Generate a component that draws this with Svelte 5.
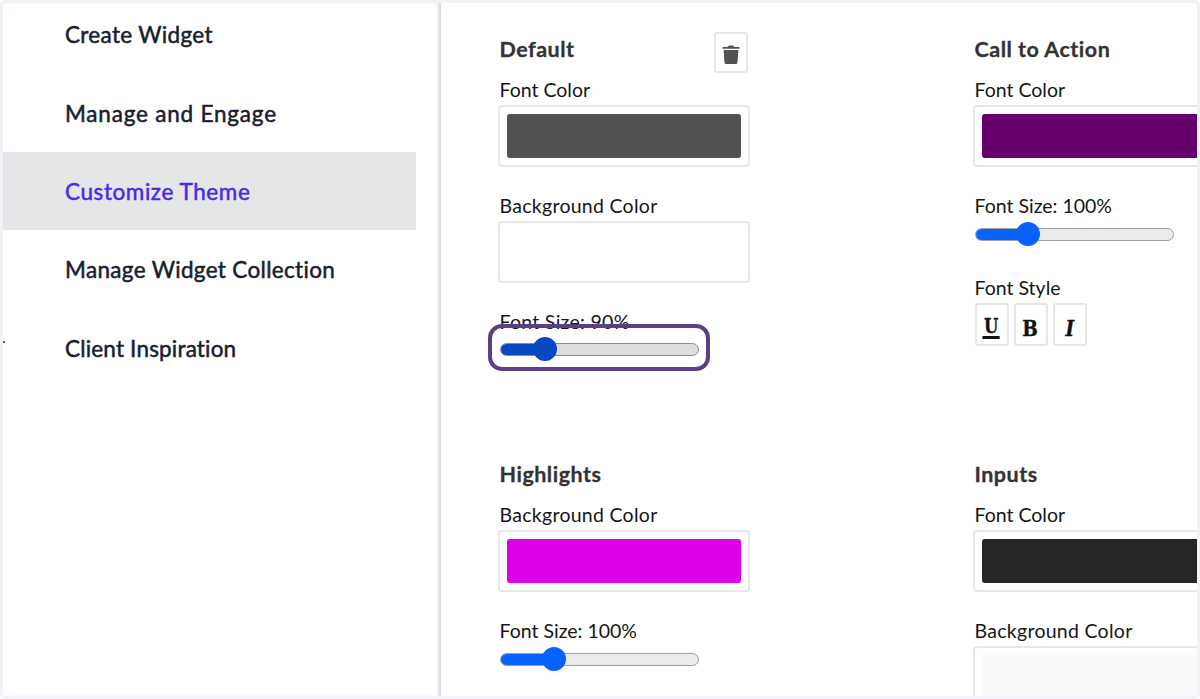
<script>
  const links = [
    { title: 'Create Widget', fit: 'create' },
    { title: 'Manage and Engage', fit: 'engage' },
    { title: 'Customize Theme', fit: 'theme', active: true },
    { title: 'Manage Widget Collection', fit: 'collection' },
    { title: 'Client Inspiration', fit: 'client' }
  ];

  const sections = [
    {
      title: 'Default',
      removable: true,
      fields: [
        { label: 'Font Color', color: '#525252' },
        { label: 'Background Color', color: '#ffffff', wide: true },
        { label: 'Font Size', size: 90, position: 22.6, focused: true, wide: true }
      ]
    },
    {
      title: 'Call to Action',
      fields: [
        { label: 'Font Color', color: '#68006c' },
        { label: 'Font Size', size: 100, position: 26.7 },
        { label: 'Font Style', styles: true }
      ]
    },
    {
      title: 'Highlights',
      fields: [
        { label: 'Background Color', color: '#dc00e8', wide: true },
        { label: 'Font Size', size: 100, position: 26.9 }
      ]
    },
    {
      title: 'Inputs',
      fields: [
        { label: 'Font Color', color: '#262626' },
        { label: 'Background Color', color: '#fafafa', wide: true }
      ]
    }
  ];
</script>

<div class="frame">
  <aside>
    <nav>
      {#each links as link}
        <a href="#top" class:active={link.active}><span class={link.fit}>{link.title}</span></a>
      {/each}
    </nav>
    <i class="tick"></i>
  </aside>

  <main>
    {#each sections as section}
      <section>
        <header>
          <h2>{section.title}</h2>
          {#if section.removable}
            <button class="trash" aria-label="Delete">
              <svg width="18" height="20" viewBox="0 0 18 20">
                <path d="M1 2h4.2q.5 0 .8-.5l.3-.5q.3-.5.9-.5h3.6q.6 0 .9.5l.3.5q.3.5.8.5H17q.5 0 .5.5v.7q0 .5-.5.5H1q-.5 0-.5-.5v-.7Q.5 2 1 2zM1.6 5h14.8l-.9 12.4q-.1 1.6-1.7 1.6H4.2q-1.6 0-1.7-1.6z" />
              </svg>
            </button>
          {/if}
        </header>
        {#each section.fields as field}
          <div class="field">
            <div class="label" class:wide={field.wide}>
              {field.label}{field.size ? `: ${field.size}%` : ''}
            </div>
            {#if field.color}
              <div class="picker">
                <div class="swatch" style="background: {field.color}"></div>
              </div>
            {:else if field.size}
              <div class="slider" class:focused={field.focused}>
                <div class="track">
                  <div class="fill" style="width: {field.position}%"></div>
                </div>
                <div class="thumb" style="left: {field.position}%"></div>
              </div>
            {:else if field.styles}
              <div class="styles">
                <button class="underline"><b>U</b></button>
                <button><b>B</b></button>
                <button class="italic"><b>I</b></button>
              </div>
            {/if}
          </div>
        {/each}
      </section>
    {/each}
  </main>
</div>

<style>
  :global(body) {
    background: #fff;
    overflow: hidden;
  }

  .frame {
    box-sizing: border-box;
    width: 1200px;
    height: 699px;
    border: 3px solid #f3f2f8;
    border-radius: 6px;
    overflow: hidden;
    display: flex;
    font-family: Lato, "Open Sans", sans-serif;
    font-variant-ligatures: none;
    color: #161616;
  }

  aside {
    position: relative;
    flex: none;
    box-sizing: border-box;
    width: 438px;
    border-right: 2px solid #dcdce0;
    box-shadow: inset -2px 0 2px #ececf2;
  }

  nav {
    margin-top: -8px;
    width: 413px;
  }

  nav a {
    box-sizing: border-box;
    display: flex;
    align-items: center;
    height: 78.4px;
    padding: 1px 0 0 62px;
    font-size: 22.5px;
    color: #172030;
    text-decoration: none;
    white-space: nowrap;
    -webkit-text-stroke: 0.5px currentColor;
  }

  nav a.active {
    background: #e5e6e8;
    color: #4c28e6;
  }

  .create,
  .collection {
    letter-spacing: 0.33px;
  }

  .engage {
    letter-spacing: 0.8px;
  }

  .theme {
    letter-spacing: 0.58px;
  }

  .client {
    letter-spacing: 0.18px;
  }

  .tick {
    position: absolute;
    left: 0;
    top: 338px;
    width: 2px;
    height: 2px;
    background: #555a66;
  }

  main {
    flex: none;
    display: grid;
    grid-template-columns: 475px 475px;
    grid-template-rows: 425px 425px;
    padding: 28px 0 0 59px;
  }

  header {
    display: flex;
    justify-content: space-between;
    width: 248px;
    height: 44px;
  }

  h2 {
    margin: 0 0 0 -0.5px;
    font-size: 21.5px;
    line-height: 36px;
    letter-spacing: 0.5px;
    color: #333;
    white-space: nowrap;
    -webkit-text-stroke: 0.3px currentColor;
  }

  button {
    box-sizing: border-box;
    width: 34px;
    height: 43.5px;
    padding: 0;
    border: 2px solid #e7e7e7;
    border-radius: 3px;
    background: #fff;
    color: #111;
  }

  .trash {
    height: 41px;
    margin-top: 1px;
    padding: 4px 0 0;
  }

  .trash svg {
    display: block;
    margin: 0 auto;
    fill: #525252;
  }

  .field {
    margin-bottom: 24.5px;
  }

  .label {
    height: 30px;
    line-height: 30px;
    margin-left: -0.5px;
    font-size: 19.5px;
    white-space: nowrap;
  }

  .wide {
    letter-spacing: 0.28px;
  }

  .picker {
    box-sizing: border-box;
    width: 252px;
    height: 61.5px;
    margin-left: -2px;
    padding: 7px;
    border: 2px solid #e7e7e7;
    border-radius: 4px;
  }

  .swatch {
    height: 100%;
    border-radius: 3px;
  }

  .slider {
    position: relative;
    width: 199px;
    height: 27px;
    display: flex;
    align-items: center;
  }

  .track {
    box-sizing: border-box;
    width: 100%;
    height: 13px;
    border: 1px solid #a0a0a0;
    border-radius: 7px;
    background: #ebebeb;
    overflow: hidden;
  }

  .fill {
    height: 100%;
    background: #0a62fe;
  }

  .thumb {
    position: absolute;
    top: 1px;
    width: 24px;
    height: 24px;
    margin-left: -12px;
    border-radius: 50%;
    background: #0a62fe;
  }

  .focused {
    margin-top: -0.8px;
  }

  .focused .track {
    border-color: #8c8c8c;
    background: #dedede;
  }

  .focused .fill,
  .focused .thumb {
    background: #0848c0;
  }

  .focused::after {
    content: '';
    position: absolute;
    box-sizing: border-box;
    left: -12.5px;
    top: -12px;
    width: 222px;
    height: 47px;
    border: 4px solid #5c4087;
    border-radius: 14px;
  }

  .styles {
    display: flex;
    gap: 5px;
  }

  .styles button {
    display: flex;
    justify-content: center;
    padding-top: 8px;
    font: 22.5px/30px "DejaVu Serif", serif;
    -webkit-text-stroke: 0.4px currentColor;
  }

  .styles b {
    transform: translateX(-0.5px) scaleX(0.82);
  }

  .styles .underline {
    font-size: 20px;
    line-height: 27px;
  }

  .underline b {
    box-sizing: border-box;
    height: 26px;
    border-bottom: 3px solid #111;
    padding: 0 2px;
  }

  .styles .italic {
    font-style: italic;
  }
</style>
